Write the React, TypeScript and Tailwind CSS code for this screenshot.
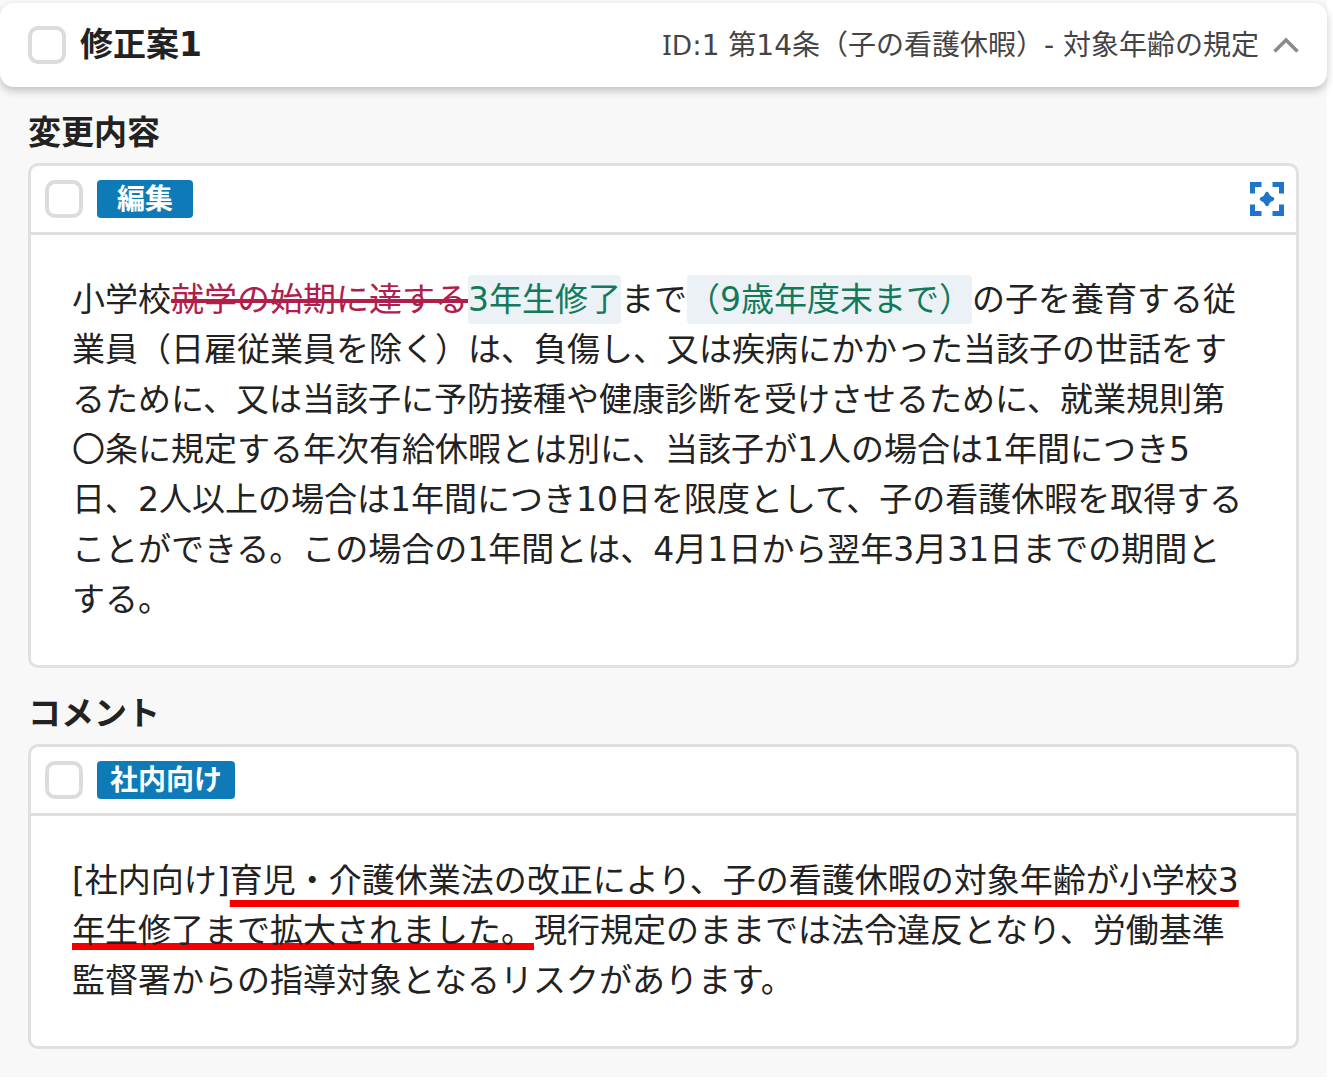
import { useState, type ReactNode } from 'react';

const CheckBox = ({ label }: { label: string }) => (
  <input
    type="checkbox"
    aria-label={label}
    className="size-[38px] shrink-0 appearance-none rounded-[10px] border-4 border-[#dcdcdc] bg-white checked:bg-[#0f7ab8]"
  />
);

const FocusIcon = () => (
  <svg viewBox="0 0 34 34" className="size-[34px]" fill="none" stroke="#1f74cc" strokeWidth="5">
    <path d="M2.5 11.500V2.500H11.500M22.500 2.500h9v9M31.500 22.500v9h-9M11.500 31.500h-9v-9" />
    <path
      d="M17 11.500c1 3 2.500 4.500 5.500 5.500-3 1-4.500 2.500-5.500 5.500-1-3-2.500-4.500-5.500-5.500 3-1 4.500-2.500 5.500-5.500z"
      fill="#1f74cc"
      strokeWidth="3.5"
      strokeLinejoin="round"
    />
  </svg>
);

const ChevronUp = () => (
  <svg viewBox="0 0 26 16" className="h-4 w-[26px]" fill="none" stroke="#8a8a8a" strokeWidth="3.5">
    <path d="M1.500 14.500 13 3l11.500 11.500" />
  </svg>
);

type SectionProps = {
  title: string;
  tag: string;
  tagClassName: string;
  action?: ReactNode;
  children: ReactNode;
};

const Section = ({ title, tag, tagClassName, action, children }: SectionProps) => (
  <section>
    <h2 className="font-['Noto_Sans_CJK_JP',sans-serif] text-[33px] leading-[50px] font-bold">{title}</h2>
    <div className="mt-2 rounded-[10px] border-[3px] border-[#e0e0e0] bg-white">
      <div className="flex h-[69px] items-center border-b-[3px] border-[#e0e0e0] pr-[12px] pl-[14px]">
        <CheckBox label={tag} />
        <span
          className={`ml-[14px] flex h-[38px] items-center justify-center rounded-[4px] bg-[#0f7ab8] pb-1 font-['Noto_Sans_CJK_JP',sans-serif] text-[28px] leading-none font-bold text-white ${tagClassName}`}
        >
          {tag}
        </span>
        {action && <div className="ml-auto flex">{action}</div>}
      </div>
      <p className="py-10 pr-[44px] pl-[41px] text-[33px] leading-[50px]">{children}</p>
    </div>
  </section>
);

const Added = ({ children }: { children: ReactNode }) => (
  <ins className="rounded-[4px] bg-[#ebf1f5] py-[5px] text-[#127a5a] no-underline">{children}</ins>
);

const App = () => {
  const [open, setOpen] = useState(true);

  return (
    <main className="mr-[6px] bg-[#f8f8f8] pt-[3px] font-['DejaVu_Sans','Noto_Sans_CJK_JP',sans-serif] text-[#222]">
      <header className="flex h-[84px] items-center rounded-[14px] bg-white pr-[28px] pl-[28px] shadow-[0_4px_8px_rgba(0,0,0,0.22)]">
        <CheckBox label="修正案1" />
        <h1 className="ml-[14px] text-[33px] leading-[50px] font-bold">修正案1</h1>
        <span className="ml-auto text-[28px] leading-10 text-[#444]">
          <span className="font-['Noto_Sans']">ID</span>:1 第14条（子の看護休暇）- 対象年齢の規定
        </span>
        <button type="button" aria-label="開閉" className="ml-[14px]" onClick={() => setOpen(!open)}>
          <ChevronUp />
        </button>
      </header>
      {open && (
        <div className="flex flex-col gap-[18px] px-[28px] pt-[18px] pb-[28px]">
          <Section
            title="変更内容"
            tag="編集"
            tagClassName="w-[96px]"
            action={
              <button type="button" aria-label="該当箇所へ移動">
                <FocusIcon />
              </button>
            }
          >
            小学校
            <del className="text-[#b01e4b] decoration-[4px]">就学の始期に達する</del>
            <Added>3年生修了</Added>まで<Added>（9歳年度末まで）</Added>
            の子を養育する従業員（日雇従業員を除く）は、負傷し、又は疾病にかかった当該子の世話をするために、又は当該子に予防接種や健康診断を受けさせるために、就業規則第〇条に規定する年次有給休暇とは別に、当該子が1人の場合は1年間につき5日、2人以上の場合は1年間につき10日を限度として、子の看護休暇を取得することができる。この場合の1年間とは、4月1日から翌年3月31日までの期間とする。
          </Section>
          <Section title="コメント" tag="社内向け" tagClassName="w-[138px]">
            [社内向け]
            <span className="underline decoration-[#f50000] decoration-[7px] underline-offset-[8px] [text-decoration-skip-ink:none]">
              育児・介護休業法の改正により、子の看護休暇の対象年齢が小学校3
            </span>
            <span className="underline decoration-[#f50000] decoration-[7px] underline-offset-[1px] [text-decoration-skip-ink:none]">
              年生修了まで拡大されました。
            </span>
            現行規定のままでは法令違反となり、労働基準監督署からの指導対象となるリスクがあります。
          </Section>
        </div>
      )}
    </main>
  );
};

export default App;
